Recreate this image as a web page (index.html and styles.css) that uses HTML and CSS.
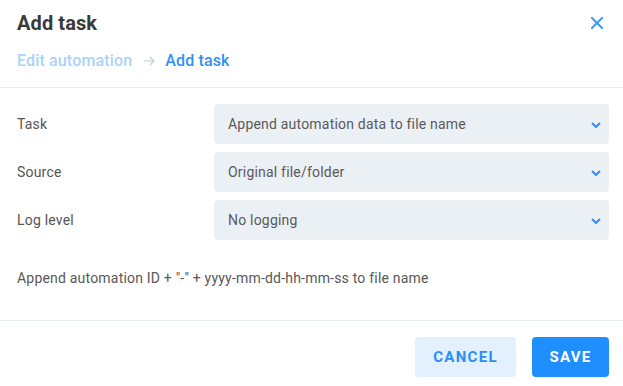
FILE: index.html
```html
<!DOCTYPE html>
<html>
<head>
<meta charset="utf-8">
<link rel="stylesheet" href="styles.css">
</head>
<body>
<div class="dialog">
  <div class="header">
    <div class="title-row">
      <h1 class="title">Add task</h1>
      <button class="close" aria-label="Close">
        <svg width="12" height="12" viewBox="0 0 12 12"><path d="M1 1 L11 11 M11 1 L1 11" stroke="#3d9bf5" stroke-width="2" stroke-linecap="square" fill="none"/></svg>
      </button>
    </div>
    <div class="crumbs">
      <span class="crumb-prev">Edit automation</span>
      <svg class="crumb-arrow" width="12" height="10" viewBox="0 0 12 10"><path d="M1 5 H11 M7 1 L11 5 L7 9" stroke="#c3ccd6" stroke-width="1.2" fill="none"/></svg>
      <span class="crumb-cur">Add task</span>
    </div>
  </div>
  <div class="body">
    <div class="form">
      <label class="label">Task</label>
      <div class="select"><span>Append automation data to file name</span><svg class="chev" width="10" height="6" viewBox="0 0 10 6"><path d="M1 1 L5 5 L9 1" stroke="#2d8cf0" stroke-width="2" fill="none"/></svg></div>
      <label class="label">Source</label>
      <div class="select"><span>Original file/folder</span><svg class="chev" width="10" height="6" viewBox="0 0 10 6"><path d="M1 1 L5 5 L9 1" stroke="#2d8cf0" stroke-width="2" fill="none"/></svg></div>
      <label class="label">Log level</label>
      <div class="select"><span>No logging</span><svg class="chev" width="10" height="6" viewBox="0 0 10 6"><path d="M1 1 L5 5 L9 1" stroke="#2d8cf0" stroke-width="2" fill="none"/></svg></div>
    </div>
    <p class="desc">Append automation ID + "-" + yyyy-mm-dd-hh-mm-ss to file name</p>
  </div>
  <div class="footer">
    <button class="btn btn-cancel">Cancel</button>
    <button class="btn btn-save">Save</button>
  </div>
</div>
</body>
</html>
```
FILE: styles.css
```css
* { box-sizing: border-box; }
html, body { margin: 0; padding: 0; background: #fff; }
body { font-family: Roboto, "Noto Sans", sans-serif; width: 623px; height: 386px; overflow: hidden; }
.dialog { display: flex; flex-direction: column; width: 623px; }
.header { padding: 0 14px 0 17px; height: 88px; border-bottom: 1px solid #ececec; }
.title-row { display: flex; align-items: center; justify-content: space-between; height: 46px; }
.title { margin: 0; font-size: 20px; font-weight: 700; color: #3a3a3a; line-height: 46px; letter-spacing: 0.1px; }
.close { border: 0; background: none; padding: 0; width: 18px; height: 18px; display: flex; align-items: center; justify-content: center; margin-right: 3px; }
.crumbs { display: flex; align-items: center; height: 28px; font-size: 16px; font-weight: 500; letter-spacing: 0.15px; }
.crumb-prev { color: #a9d3fb; }
.crumb-arrow { margin: 1px 10px 0 11px; }
.crumb-cur { color: #2f91f3; }
.body { padding: 16px 14px 0 17px; height: 233px; border-bottom: 1px solid #e9eef3; }
.form { display: grid; grid-template-columns: 197px 1fr; row-gap: 8px; align-items: center; }
.label { font-size: 14px; color: #555; letter-spacing: 0.2px; }
.select { height: 40px; background: #ebf0f5; border-radius: 4px; display: flex; align-items: center; justify-content: space-between; padding: 0 8px 0 14px; font-size: 14px; color: #5a5a5a; letter-spacing: 0.2px; }
.chev { margin-top: 1px; }
.desc { margin: 30px 0 0; font-size: 14px; color: #585858; line-height: 16px; letter-spacing: 0.2px; }
.footer { display: flex; justify-content: flex-end; gap: 16px; padding: 16px 14px 0 17px; }
.btn { height: 40px; border: 0; border-radius: 4px; padding: 0 17px; font-family: Roboto, sans-serif; font-size: 15px; font-weight: 700; letter-spacing: 1.3px; text-transform: uppercase; }
.btn-cancel { background: #e3f0fe; color: #2c8ef4; width: 101px; }
.btn-save { background: #1f8ffe; color: #fff; width: 77px; }
```
